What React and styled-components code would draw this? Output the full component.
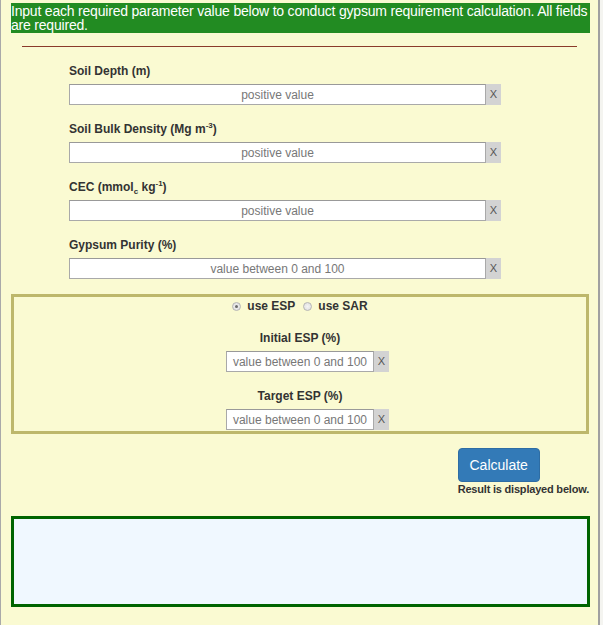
import React, { useState } from "react"
import styled, { createGlobalStyle } from "styled-components"

const GlobalStyle = createGlobalStyle`
  html, body {
    margin: 0;
    padding: 0;
    background: #f4f4f0;
  }
  body {
    font-family: "Liberation Sans", Arial, sans-serif;
    color: #333;
  }
`

const Page = styled.div`
  box-sizing: border-box;
  width: 600px;
  min-height: 625px;
  background: #fafad2;
  border-left: 1px solid #a9a9a9;
  border-right: 2px solid #a0a0a0;
  padding-top: 3px;
`

const Banner = styled.div`
  margin: 0 8px 0 10px;
  background: #228b22;
  color: #ffffff;
  font-size: 14px;
  line-height: 14px;
  padding: 1px 0 1px 0;
  letter-spacing: -0.2px;
`

const Rule = styled.hr`
  margin: 13px 21px 0 21px;
  border: 0;
  border-top: 1px solid #8b3a2a;
  height: 0;
`

const Form = styled.div`
  padding: 17px 0 0 68px;
`

const Group = styled.div`
  & + & {
    margin-top: 17px;
  }
`

const Label = styled.div`
  font-size: 12px;
  font-weight: bold;
  line-height: 14px;
  color: #333;
  margin-bottom: 6px;
  text-align: ${p => (p.$center ? "center" : "left")};

  sup,
  sub {
    font-size: 8px;
    line-height: 0;
  }
`

const InputRow = styled.div`
  display: flex;
  justify-content: ${p => (p.$center ? "center" : "flex-start")};
  padding-left: ${p => (p.$center ? "15px" : "0")};
`

const TextInput = styled.input`
  box-sizing: border-box;
  width: ${p => p.$width}px;
  height: 21px;
  margin: 0;
  padding: 0 4px;
  border: 1px solid #a9a9a9;
  border-top-color: #999;
  background: #ffffff;
  font-family: "Liberation Sans", Arial, sans-serif;
  font-size: 12px;
  text-align: center;
  color: #333;
  outline: none;

  &::placeholder {
    color: #777;
  }
`

const ClearButton = styled.button`
  box-sizing: border-box;
  width: 15px;
  height: 21px;
  margin: 0;
  padding: 0;
  border: 0;
  background: #d3d3d3;
  color: #555;
  font-family: "Liberation Sans", Arial, sans-serif;
  font-size: 11px;
  line-height: 21px;
  text-align: center;
  cursor: pointer;
`

const EspBox = styled.div`
  margin: 15px 9px 0 10px;
  border: 3px solid #bdb76b;
  padding: 2px 0 1px;
`

const RadioRow = styled.div`
  display: flex;
  justify-content: center;
  align-items: center;
  gap: 4px;
  font-size: 12px;
  font-weight: bold;
  line-height: 14px;
  margin-bottom: 18px;
`

const RadioOption = styled.label`
  display: flex;
  align-items: center;
  gap: 6px;
  margin-left: ${p => (p.$first ? "0" : "4px")};
  cursor: pointer;
`

const RadioDot = styled.span`
  box-sizing: border-box;
  width: 9px;
  height: 9px;
  border-radius: 50%;
  border: 1px solid #b5b5b5;
  background: radial-gradient(circle, #f4f4f4 0%, #dcdcdc 100%);
  display: flex;
  align-items: center;
  justify-content: center;

  &::after {
    content: "";
    width: 3px;
    height: 3px;
    border-radius: 50%;
    background: ${p => (p.$checked ? "#6a6a6a" : "transparent")};
  }
`

const EspGroup = styled.div`
  & + & {
    margin-top: 17px;
  }
`

const Actions = styled.div`
  display: flex;
  justify-content: flex-end;
  padding: 14px 9px 0 0;
`

const ActionColumn = styled.div`
  display: flex;
  flex-direction: column;
  align-items: flex-start;
`

const CalcButton = styled.button`
  box-sizing: border-box;
  width: 82px;
  height: 34px;
  border: 1px solid #2e6da4;
  border-radius: 4px;
  background: #337ab7;
  color: #ffffff;
  font-family: "Liberation Sans", Arial, sans-serif;
  font-size: 14px;
  cursor: pointer;
`

const Note = styled.div`
  font-size: 11px;
  font-weight: bold;
  line-height: 13px;
  margin-top: 1px;
  letter-spacing: -0.2px;
  color: #333;
`

const ResultBox = styled.div`
  box-sizing: border-box;
  height: 91px;
  margin: 20px 8px 0 10px;
  border: 3px solid #006400;
  background: #f0f8ff;
`

const fields = [
  { key: "depth", label: <>Soil Depth (m)</>, placeholder: "positive value" },
  {
    key: "bulk",
    label: (
      <>
        Soil Bulk Density (Mg m<sup>-3</sup>)
      </>
    ),
    placeholder: "positive value"
  },
  {
    key: "cec",
    label: (
      <>
        CEC (mmol<sub>c</sub> kg<sup>-1</sup>)
      </>
    ),
    placeholder: "positive value"
  },
  { key: "purity", label: <>Gypsum Purity (%)</>, placeholder: "value between 0 and 100" }
]

export default function App() {
  const [mode, setMode] = useState("esp")
  const [values, setValues] = useState({})

  const setValue = (key, v) => setValues(prev => ({ ...prev, [key]: v }))
  const name = mode === "esp" ? "ESP" : "SAR"

  return (
    <Page>
      <GlobalStyle />
      <Banner>
        Input each required parameter value below to conduct gypsum requirement calculation. All fields
        are required.
      </Banner>
      <Rule />
      <Form>
        {fields.map(f => (
          <Group key={f.key}>
            <Label>{f.label}</Label>
            <InputRow>
              <TextInput
                $width={417}
                placeholder={f.placeholder}
                value={values[f.key] || ""}
                onChange={e => setValue(f.key, e.target.value)}
              />
              <ClearButton onClick={() => setValue(f.key, "")}>X</ClearButton>
            </InputRow>
          </Group>
        ))}
      </Form>
      <EspBox>
        <RadioRow>
          <RadioOption $first onClick={() => setMode("esp")}>
            <RadioDot $checked={mode === "esp"} />
            use ESP
          </RadioOption>
          <RadioOption onClick={() => setMode("sar")}>
            <RadioDot $checked={mode === "sar"} />
            use SAR
          </RadioOption>
        </RadioRow>
        {["initial", "target"].map(k => (
          <EspGroup key={k}>
            <Label $center>
              {k === "initial" ? "Initial" : "Target"} {name} (%)
            </Label>
            <InputRow $center>
              <TextInput
                $width={148}
                placeholder="value between 0 and 100"
                value={values[k] || ""}
                onChange={e => setValue(k, e.target.value)}
              />
              <ClearButton onClick={() => setValue(k, "")}>X</ClearButton>
            </InputRow>
          </EspGroup>
        ))}
      </EspBox>
      <Actions>
        <ActionColumn>
          <CalcButton>Calculate</CalcButton>
          <Note>Result is displayed below.</Note>
        </ActionColumn>
      </Actions>
      <ResultBox />
    </Page>
  )
}
